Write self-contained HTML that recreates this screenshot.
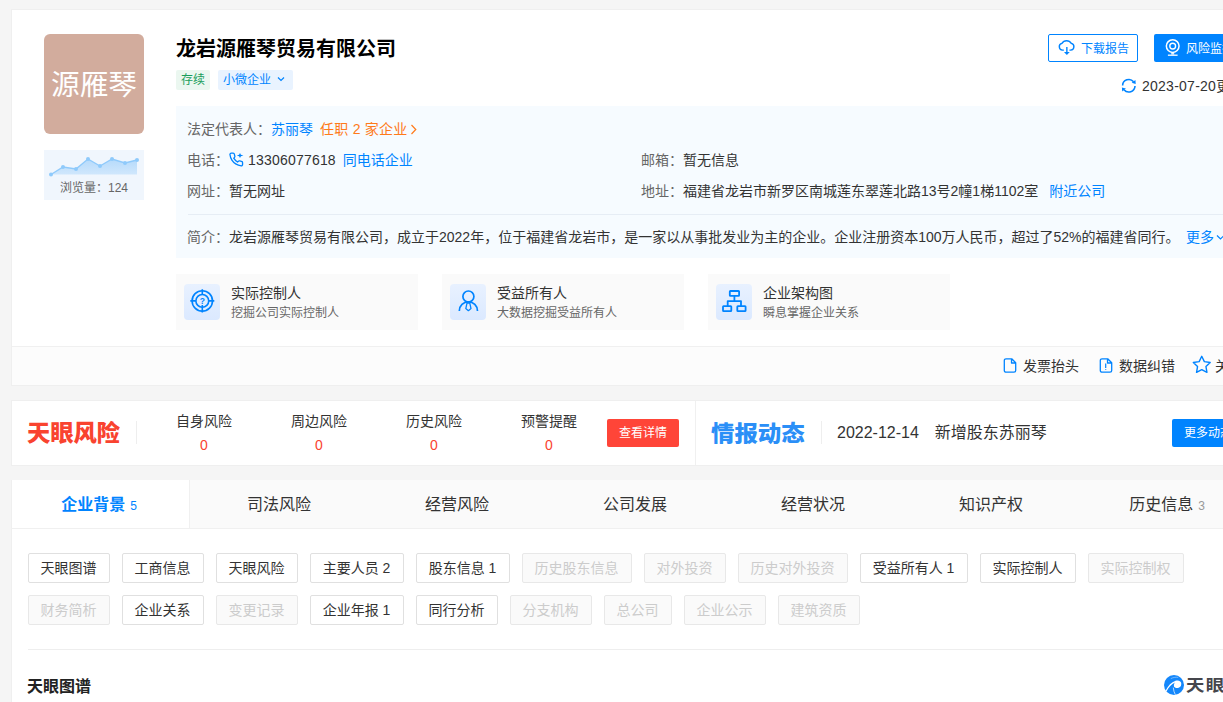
<!DOCTYPE html>
<html lang="zh-CN">
<head>
<meta charset="utf-8">
<title>龙岩源雁琴贸易有限公司</title>
<style>
*{box-sizing:border-box;margin:0;padding:0}
html,body{width:1223px;height:702px;overflow:hidden;background:#f5f5f5}
body{position:relative;font-family:"Liberation Sans","Noto Sans CJK SC",sans-serif;font-size:14px;color:#333}
.a{position:absolute;white-space:nowrap}
.t{position:absolute;white-space:nowrap;line-height:20px;height:20px}
.blue{color:#0084ff}
.g6{color:#666}
svg{position:absolute;overflow:visible}
/* cards */
#c1{left:11px;top:9px;width:1262px;height:377px;background:#fff;border:1px solid #efefef}
#c1b{left:12px;top:346px;width:1260px;height:39px;background:#fcfcfc;border-top:1px solid #f0f0f0}
#c2{left:11px;top:400px;width:1262px;height:66px;background:#fff;border:1px solid #efefef}
#tabs{left:11px;top:480px;width:1262px;height:49px;background:#fafafa;border-bottom:1px solid #f0f0f0;border-left:1px solid #efefef}
#c3{left:11px;top:529px;width:1262px;height:180px;background:#fff;border-left:1px solid #efefef}
.logo{left:44px;top:34px;width:100px;height:100px;border-radius:6px;background:#d2ac9d;color:#fff;font-size:28.700px;line-height:103px;text-align:center}
.tag{height:20px;line-height:21px;font-size:12px;border-radius:2px;top:70px}
.info{left:176px;top:106px;width:1100px;height:152px;background:#f6fbff}
.fc{top:274px;width:242px;height:56px;background:#fafafa}
.fi{top:284px;width:36px;height:36px;border-radius:4px;background:linear-gradient(180deg,#e8f1ff,#dbe9ff)}
.btn{position:absolute;height:30px;line-height:28px;padding-right:1px;border:1px solid #e0e0e0;border-radius:2px;background:#fff;color:#333;font-size:14px;text-align:center;white-space:nowrap}
.btn.d{background:#fafafa;color:#ccc;border-color:#e8e8e8}
.tab{position:absolute;top:480px;width:178px;height:48px;line-height:50px;text-align:center;font-size:16px;color:#333;white-space:nowrap}
.rk{position:absolute;width:80px;text-align:center;white-space:nowrap;line-height:20px}
</style>
</head>
<body>
<div class="a" id="c1"></div>
<div class="a" id="c1b"></div>
<div class="a" id="c2"></div>
<div class="a" id="tabs"></div>
<div class="a" id="c3"></div>

<!-- logo + chart -->
<div class="a logo">源雁琴</div>
<div class="a" style="left:44px;top:150px;width:100px;height:50px;background:#f0f6fd"></div>
<svg style="left:44px;top:150px" width="100" height="50" viewBox="0 0 100 50">
  <path d="M7 24.500 L19 17 L32 19 L44 9 L56 16 L68 9 L81 13 L93 10 L93 24.500 Z" fill="url(#cg)"/>
  <defs><linearGradient id="cg" x1="0" y1="0" x2="0" y2="1"><stop offset="0" stop-color="#b5dafb"/><stop offset="1" stop-color="#d0e7fc"/></linearGradient></defs><path d="M7 24.500 L19 17 L32 19 L44 9 L56 16 L68 9 L81 13 L93 10" fill="none" stroke="#8fcafb" stroke-width="1.400"/>
  <g fill="#8fcafb"><circle cx="7" cy="24.500" r="2"/><circle cx="19" cy="17" r="2"/><circle cx="32" cy="19" r="2"/><circle cx="44" cy="9" r="2"/><circle cx="56" cy="16" r="2"/><circle cx="68" cy="9" r="2"/><circle cx="81" cy="13" r="2"/><circle cx="93" cy="10" r="2"/></g>
</svg>
<div class="t g6" style="left:44px;top:178px;width:100px;text-align:center;font-size:12px">浏览量：124</div>

<!-- title -->
<div class="a" style="left:176px;top:33px;font-size:20px;line-height:32px;font-weight:bold;color:#000">龙岩源雁琴贸易有限公司</div>
<div class="a tag" style="left:176px;width:34px;text-align:center;background:#ebf7f0;color:#1a9e5c">存续</div>
<div class="a tag" style="left:218px;width:75px;padding-left:5px;background:#e9f3ff;color:#0084ff">小微企业</div>
<svg style="left:277px;top:76px" width="8" height="6" viewBox="0 0 8 6"><path d="M1 1.5 L4 4.5 L7 1.5" fill="none" stroke="#0084ff" stroke-width="1.2"/></svg>

<!-- top-right buttons -->
<div class="a" style="left:1048px;top:34px;width:90px;height:28px;border:1px solid #0084ff;border-radius:2px;background:#fff"></div>
<svg style="left:1058px;top:40px" width="17" height="16" viewBox="0 0 17 16"><path d="M5.400 10.100 H4.500 A3.400 3.400 0 0 1 3.900 3.400 A5.440 5.440 0 0 1 13.300 3.400 A3.400 3.400 0 0 1 12.700 10.100 H11.900" fill="none" stroke="#0084ff" stroke-width="1.4" stroke-linecap="round"/><path d="M8.860 7 V12.500" fill="none" stroke="#0084ff" stroke-width="1.400"/><path d="M6 11.900 H11.720 L8.860 14.900 Z" fill="#0084ff"/></svg>
<div class="t blue" style="left:1081px;top:39px;font-size:12px">下载报告</div>
<div class="a" style="left:1154px;top:34px;width:100px;height:28px;border-radius:2px;background:#0084ff"></div>
<svg style="left:1165px;top:38px" width="16" height="19" viewBox="0 0 16 19"><circle cx="7.700" cy="8.100" r="6.350" fill="none" stroke="#fff" stroke-width="1.500"/><circle cx="7.700" cy="8.100" r="2.900" fill="none" stroke="#fff" stroke-width="1.400"/><path d="M6.200 14.800 H9.200 V16.600 H6.200 Z" fill="#fff" opacity=".85"/><path d="M2.900 17.200 H12.600" stroke="#fff" stroke-width="1.300" fill="none"/></svg>
<div class="t" style="left:1186px;top:39px;font-size:12px;color:#fff">风险监控</div>
<svg style="left:1121px;top:78px" width="16" height="16" viewBox="0 0 16 16"><path d="M1.600 7.600 A6.200 6.200 0 0 1 12.600 3.800" fill="none" stroke="#0084ff" stroke-width="1.600"/><path d="M14 8 A6.200 6.200 0 0 1 3 11.700" fill="none" stroke="#0084ff" stroke-width="1.600"/><path d="M14.400 1.900 L14.700 6 L10.700 4.800 Z" fill="#0084ff"/><path d="M1.200 13.500 L0.900 9.400 L4.900 10.600 Z" fill="#0084ff"/></svg>
<div class="t" style="left:1142px;top:76px"><span style="letter-spacing:.25px">2023-07-20</span>更新</div>

<!-- info box -->
<div class="a info"></div>
<div class="t" style="left:187px;top:119px"><span class="g6">法定代表人：</span><span class="blue">苏丽琴</span><span style="color:#ff7a1a;margin-left:7px;letter-spacing:.25px">任职 2 家企业</span></div>
<svg style="left:410px;top:124px" width="7" height="11" viewBox="0 0 7 11"><path d="M1.5 1 L5.8 5.5 L1.5 10" fill="none" stroke="#ff7a1a" stroke-width="1.2"/></svg>
<div class="t" style="left:187px;top:150px"><span class="g6">电话：</span></div>
<svg style="left:229px;top:152px" width="16" height="15" viewBox="0 0 16 15"><g transform="translate(-0.400,-0.100) scale(0.635)"><path d="M22 16.920v3a2 2 0 0 1-2.180 2 19.790 19.790 0 0 1-8.630-3.070 19.500 19.500 0 0 1-6-6 19.790 19.790 0 0 1-3.070-8.670A2 2 0 0 1 4.110 2h3a2 2 0 0 1 2 1.720 12.840 12.840 0 0 0 .7 2.810 2 2 0 0 1-.45 2.110L8.090 9.910a16 16 0 0 0 6 6l1.270-1.270a2 2 0 0 1 2.110-.45 12.840 12.840 0 0 0 2.810.7A2 2 0 0 1 22 16.920z" fill="none" stroke="#0084ff" stroke-width="2.100" stroke-linejoin="round"/></g><path d="M11 0.900 L11.900 2.700 L14.400 3.450 L11.900 4.200 L11 6 L10.100 4.200 L7.800 3.450 L10.100 2.700 Z" fill="#0084ff"/></svg>
<div class="t" style="left:248px;top:150px"><span style="letter-spacing:.2px">13306077618</span><span class="blue" style="margin-left:7px">同电话企业</span></div>
<div class="t" style="left:187px;top:181px"><span class="g6">网址：</span>暂无网址</div>
<div class="t" style="left:641px;top:150px"><span class="g6">邮箱：</span>暂无信息</div>
<div class="t" style="left:641px;top:181px"><span class="g6">地址：</span>福建省龙岩市新罗区南城莲东翠莲北路13号2幢1梯1102室<span class="blue" style="margin-left:11px">附近公司</span></div>
<div class="a" style="left:188px;top:214px;width:1100px;height:1px;background:#e6edf5"></div>
<div class="t" style="left:187px;top:227px"><span class="g6">简介：</span>龙岩源雁琴贸易有限公司，成立于2022年，位于福建省龙岩市，是一家以从事批发业为主的企业。企业注册资本100万人民币，超过了52%的福建省同行。</div>
<div class="t blue" style="left:1186px;top:227px">更多</div>
<svg style="left:1216px;top:234px" width="9" height="7" viewBox="0 0 9 7"><path d="M1 1.5 L4.5 5 L8 1.5" fill="none" stroke="#0084ff" stroke-width="1.2"/></svg>

<!-- feature cards -->
<div class="a fc" style="left:176px"></div>
<div class="a fc" style="left:442px"></div>
<div class="a fc" style="left:708px"></div>
<div class="a fi" style="left:184px"></div>
<div class="a fi" style="left:450px"></div>
<div class="a fi" style="left:716px"></div>
<svg style="left:184px;top:284px" width="36" height="36" viewBox="0 0 36 36"><g fill="none" stroke="#0084ff" stroke-width="1.600"><circle cx="18.300" cy="16.900" r="10.200"/><circle cx="18.300" cy="16.900" r="6.400"/><path d="M18.300 5.200 V10.500 M18.300 21 V28.600 M6.300 16.900 H11.900 M24.700 16.900 H30.300"/></g><text x="18.300" y="19.600" font-size="8.500" font-weight="bold" text-anchor="middle" fill="#0084ff" font-family="Liberation Sans,sans-serif">?</text></svg>
<svg style="left:450px;top:284px" width="36" height="36" viewBox="0 0 36 36"><g fill="none" stroke="#0084ff" stroke-width="1.700"><circle cx="18.400" cy="12.500" r="5.500"/><path d="M9.300 26.900 A9.100 9.100 0 0 1 27.500 26.900" stroke-linecap="butt"/><path d="M17 19.200 H19.800 L21 24.600 L18.400 26.700 L15.800 24.600 Z" stroke-width="1.300" stroke-linejoin="round"/></g></svg>
<svg style="left:716px;top:284px" width="36" height="36" viewBox="0 0 36 36"><g fill="none" stroke="#0084ff" stroke-width="1.800" stroke-linejoin="round"><rect x="13.800" y="7" width="9.300" height="4.800" rx=".6"/><rect x="7" y="22.100" width="8.300" height="5.100" rx=".6"/><rect x="21.300" y="22.100" width="8.300" height="5.100" rx=".6"/><path d="M18.400 12 V17.100 M11.700 22 V17.100 H25 V22"/></g></svg>
<div class="t" style="left:231px;top:283px">实际控制人</div>
<div class="t g6" style="left:231px;top:303px;font-size:12px">挖掘公司实际控制人</div>
<div class="t" style="left:497px;top:283px">受益所有人</div>
<div class="t g6" style="left:497px;top:303px;font-size:12px">大数据挖掘受益所有人</div>
<div class="t" style="left:763px;top:283px">企业架构图</div>
<div class="t g6" style="left:763px;top:303px;font-size:12px">瞬息掌握企业关系</div>

<!-- bottom bar -->
<svg style="left:1003px;top:358px" width="14" height="15" viewBox="0 0 13 15"><path d="M2.500 .8 H8.200 L12.200 4.800 V12.500 A1.700 1.700 0 0 1 10.500 14.200 H2.500 A1.700 1.700 0 0 1 .8 12.500 V2.500 A1.700 1.700 0 0 1 2.500 .8 Z M8 1 V5 H12" fill="none" stroke="#0084ff" stroke-width="1.300" stroke-linejoin="round"/></svg>
<div class="t" style="left:1023px;top:356px">发票抬头</div>
<svg style="left:1099px;top:358px" width="14" height="15" viewBox="0 0 13 15"><path d="M2.500 .8 H8.200 L12.200 4.800 V12.500 A1.700 1.700 0 0 1 10.500 14.200 H2.500 A1.700 1.700 0 0 1 .8 12.500 V2.500 A1.700 1.700 0 0 1 2.500 .8 Z M8 1 V5 H12" fill="none" stroke="#0084ff" stroke-width="1.300" stroke-linejoin="round"/><path d="M6.200 5.600 V10 M6.200 11 V11.800" stroke="#0084ff" stroke-width="1.200" fill="none"/></svg>
<div class="t" style="left:1119px;top:356px">数据纠错</div>
<svg style="left:1191.700px;top:355.400px" width="19.500" height="18.400" viewBox="0 0 18 17"><path d="M9 1.200 L11.400 6.100 L16.800 6.900 L12.900 10.700 L13.800 16 L9 13.500 L4.200 16 L5.100 10.700 L1.200 6.900 L6.600 6.100 Z" fill="none" stroke="#0084ff" stroke-width="1.3" stroke-linejoin="round"/></svg>
<div class="t" style="left:1215px;top:356px">关注</div>

<!-- risk card -->
<div class="a" style="left:27px;top:418px;font-size:22.500px;line-height:32px;font-weight:900;color:#f9432f;transform:scaleX(1.035);transform-origin:0 0">天眼风险</div>
<div class="a" style="left:136px;top:421px;width:1px;height:23px;background:#eee"></div>
<div class="rk" style="left:164px;top:411px">自身风险</div><div class="rk" style="left:164px;top:435px;color:#f9432f">0</div>
<div class="rk" style="left:279px;top:411px">周边风险</div><div class="rk" style="left:279px;top:435px;color:#f9432f">0</div>
<div class="rk" style="left:394px;top:411px">历史风险</div><div class="rk" style="left:394px;top:435px;color:#f9432f">0</div>
<div class="rk" style="left:509px;top:411px">预警提醒</div><div class="rk" style="left:509px;top:435px;color:#f9432f">0</div>
<div class="a" style="left:607px;top:419px;width:72px;height:28px;line-height:28px;border-radius:2px;background:#ff4538;color:#fff;font-size:12px;text-align:center">查看详情</div>
<div class="a" style="left:695px;top:401px;width:1px;height:64px;background:#f0f0f0"></div>
<div class="a" style="left:711px;top:418px;font-size:22px;line-height:32px;font-weight:900;color:#2b8ff7;transform:scaleX(1.065);transform-origin:0 0">情报动态</div>
<div class="a" style="left:821px;top:421px;width:1px;height:23px;background:#eee"></div>
<div class="a" style="left:837px;top:422px;font-size:16px;line-height:22px">2022-12-14<span style="margin-left:16px">新增股东苏丽琴</span></div>
<div class="a" style="left:1172px;top:419px;width:80px;height:28px;line-height:28px;border-radius:2px;background:#0084ff;color:#fff;font-size:12px;padding-left:12px">更多动态</div>

<!-- tabs -->
<div class="a" style="left:12px;top:480px;width:178px;height:48px;background:#fff;border-right:1px solid #f0f0f0"></div>
<div class="tab" style="left:10px;color:#0084ff"><b>企业背景</b><span style="font-size:12px;margin-left:5px">5</span></div>
<div class="tab" style="left:190px">司法风险</div>
<div class="tab" style="left:368px">经营风险</div>
<div class="tab" style="left:546px">公司发展</div>
<div class="tab" style="left:724px">经营状况</div>
<div class="tab" style="left:902px">知识产权</div>
<div class="tab" style="left:1078px">历史信息<span style="font-size:12px;margin-left:5px;color:#999">3</span></div>

<!-- filter buttons -->
<div class="btn" style="left:28px;top:553px;width:82px">天眼图谱</div>
<div class="btn" style="left:122px;top:553px;width:82px">工商信息</div>
<div class="btn" style="left:216px;top:553px;width:82px">天眼风险</div>
<div class="btn" style="left:310px;top:553px;width:94px">主要人员 2</div>
<div class="btn" style="left:416px;top:553px;width:94px">股东信息 1</div>
<div class="btn d" style="left:522px;top:553px;width:110px">历史股东信息</div>
<div class="btn d" style="left:644px;top:553px;width:82px">对外投资</div>
<div class="btn d" style="left:738px;top:553px;width:110px">历史对外投资</div>
<div class="btn" style="left:860px;top:553px;width:108px">受益所有人 1</div>
<div class="btn" style="left:980px;top:553px;width:96px">实际控制人</div>
<div class="btn d" style="left:1088px;top:553px;width:96px">实际控制权</div>

<div class="btn d" style="left:28px;top:595px;width:82px">财务简析</div>
<div class="btn" style="left:122px;top:595px;width:82px">企业关系</div>
<div class="btn d" style="left:216px;top:595px;width:82px">变更记录</div>
<div class="btn" style="left:310px;top:595px;width:94px">企业年报 1</div>
<div class="btn" style="left:416px;top:595px;width:82px">同行分析</div>
<div class="btn d" style="left:510px;top:595px;width:82px">分支机构</div>
<div class="btn d" style="left:604px;top:595px;width:68px">总公司</div>
<div class="btn d" style="left:684px;top:595px;width:82px">企业公示</div>
<div class="btn d" style="left:778px;top:595px;width:82px">建筑资质</div>

<div class="a" style="left:28px;top:649px;width:1230px;height:1px;background:#eee"></div>
<div class="a" style="left:27px;top:675px;font-size:16px;line-height:24px;font-weight:bold;color:#222">天眼图谱</div>

<!-- watermark logo -->
<svg style="left:1164px;top:675px" width="20" height="20" viewBox="0 0 20 20"><circle cx="10" cy="10" r="10" fill="#1487fb"/><path d="M1.700 15.600 C4 10.500 7.500 7 11.500 5.700 C14.600 4.800 17.300 6.200 17.600 8.700 C17.800 10.600 16.600 12.200 14.600 12.800 C12.900 13.300 11.100 12.900 10.100 11.700 C9.600 10.300 10 8.800 10.900 7.500 C7.600 9 4.600 12.100 2.500 16.600 Z" fill="#fff"/><path d="M16.600 5.600 C19.600 7.600 20.300 11.200 17.600 13.400 C15.600 14.900 13 14.600 11.600 13.200 C13.600 13.700 15.600 13 16.700 11.400 C17.900 9.600 17.700 7.300 16.600 5.600 Z" fill="#1487fb"/><path d="M9.300 12.600 C9.500 15.200 10.200 17.600 11.300 19.600" stroke="#fff" stroke-width=".7" fill="none"/><path d="M6.800 3.600 C9.200 2.400 11.800 2 14.200 2.400" stroke="#fff" stroke-width=".5" fill="none" opacity=".8"/></svg>
<div class="a" style="left:1186px;top:672px;font-size:16px;line-height:28px;font-weight:bold;color:#45464c;letter-spacing:1.200px;transform:scaleX(1.150);transform-origin:0 0">天眼查</div>
</body>
</html>
